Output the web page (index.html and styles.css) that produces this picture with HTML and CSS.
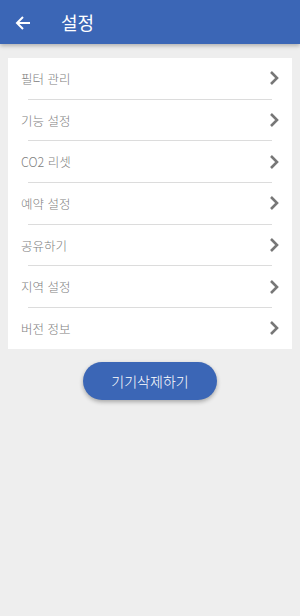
FILE: index.html
```html
<!DOCTYPE html>
<html lang="ko">
<head>
    <meta charset="UTF-8">
    <meta name="viewport" content="width=device-width, initial-scale=1.0">
    <title>설정</title>
    <link rel="stylesheet" href="styles.css">
</head>
<body>
    <div class="header">
        <svg class="back" width="16" height="16" viewBox="0 0 16 16">
            <path d="M15 8H2M8 2L2 8l6 6" fill="none" stroke="#fff" stroke-width="2"/>
        </svg>
        <span class="title">설정</span>
    </div>

    <div class="menu">
        <div class="row"><span>필터 관리</span><svg class="chev" viewBox="0 0 10 16"><path d="M2 2l6 6-6 6" fill="none" stroke="#777" stroke-width="2.6"/></svg></div>
        <div class="row"><span>기능 설정</span><svg class="chev" viewBox="0 0 10 16"><path d="M2 2l6 6-6 6" fill="none" stroke="#777" stroke-width="2.6"/></svg></div>
        <div class="row"><span>CO2 리셋</span><svg class="chev" viewBox="0 0 10 16"><path d="M2 2l6 6-6 6" fill="none" stroke="#777" stroke-width="2.6"/></svg></div>
        <div class="row"><span>예약 설정</span><svg class="chev" viewBox="0 0 10 16"><path d="M2 2l6 6-6 6" fill="none" stroke="#777" stroke-width="2.6"/></svg></div>
        <div class="row"><span>공유하기</span><svg class="chev" viewBox="0 0 10 16"><path d="M2 2l6 6-6 6" fill="none" stroke="#777" stroke-width="2.6"/></svg></div>
        <div class="row"><span>지역 설정</span><svg class="chev" viewBox="0 0 10 16"><path d="M2 2l6 6-6 6" fill="none" stroke="#777" stroke-width="2.6"/></svg></div>
        <div class="row"><span>버전 정보</span><svg class="chev" viewBox="0 0 10 16"><path d="M2 2l6 6-6 6" fill="none" stroke="#777" stroke-width="2.6"/></svg></div>
    </div>

    <div class="actions">
        <button class="delete">기기삭제하기</button>
    </div>
</body>
</html>
```

FILE: styles.css
```css
body {
    margin: 0;
    padding: 0;
    background: #eeeeee;
    font-family: "Noto Sans CJK KR", "Noto Sans", sans-serif;
    height: 616px;
}

.header {
    height: 44px;
    background: #3b66b6;
    display: flex;
    align-items: center;
    box-shadow: 0 2px 4px rgba(0, 0, 0, 0.25);
}

.back {
    margin-left: 15px;
    margin-top: 1px;
}

.title {
    color: #fff;
    font-size: 18px;
    margin-left: 30px;
}

.menu {
    margin: 14px 8px 0;
    background: #fff;
}

.row {
    height: 40.7px;
    display: flex;
    align-items: center;
    justify-content: space-between;
    padding: 0 13px;
    position: relative;
}

.row + .row::before {
    content: "";
    position: absolute;
    top: -1px;
    left: 20px;
    right: 20px;
    height: 1px;
    background: #dcdcdc;
}

.row + .row {
    margin-top: 1px;
}

.row span {
    color: #808080;
    font-size: 12.5px;
    font-weight: 300;
}

.chev {
    width: 10px;
    height: 16px;
}

.actions {
    display: flex;
    justify-content: center;
    margin-top: 13px;
}

.delete {
    width: 134px;
    height: 38px;
    border: 0;
    border-radius: 19px;
    background: #3b66b6;
    color: #fff;
    font-family: "Noto Sans CJK KR", "Noto Sans", sans-serif;
    font-size: 14px;
    font-weight: 300;
    box-shadow: 0 2px 4px rgba(0, 0, 0, 0.3);
}
```
